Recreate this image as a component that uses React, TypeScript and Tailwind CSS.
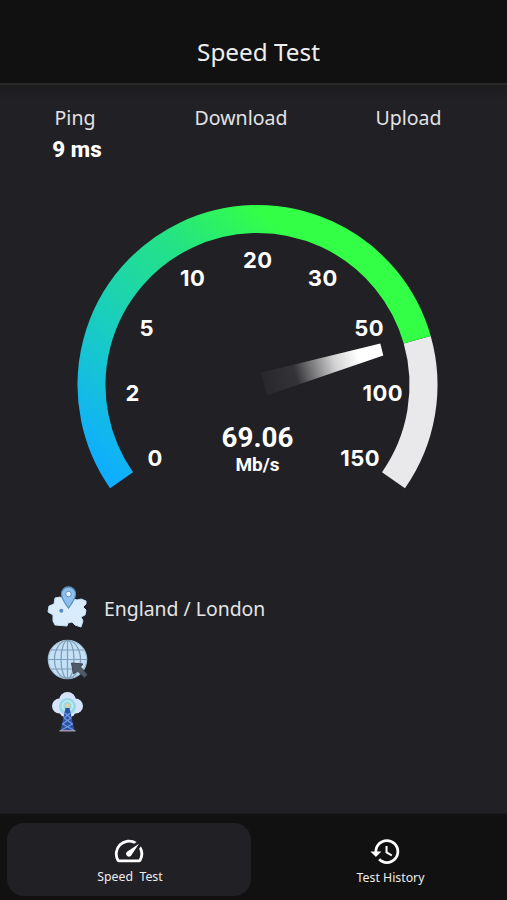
import type { ReactNode } from 'react';
import { MdHistory, MdSpeed } from 'react-icons/md';

const TICKS = [
  { label: '0', x: 155, y: 458 },
  { label: '2', x: 132.5, y: 393 },
  { label: '5', x: 146.5, y: 328 },
  { label: '10', x: 192.5, y: 278 },
  { label: '20', x: 257.5, y: 260 },
  { label: '30', x: 322.5, y: 278 },
  { label: '50', x: 369, y: 328 },
  { label: '100', x: 382.5, y: 393 },
  { label: '150', x: 360, y: 458 },
];

const CX = 257.5;
const CY = 385;
const RADIUS = 166;

function arc(from: number, to: number) {
  const point = (deg: number) => {
    const rad = (deg * Math.PI) / 180;
    return `${CX + RADIUS * Math.cos(rad)} ${CY + RADIUS * Math.sin(rad)}`;
  };
  const large = to - from > 180 ? 1 : 0;
  return `M ${point(from)} A ${RADIUS} ${RADIUS} 0 ${large} 1 ${point(to)}`;
}

export default function App() {
  return (
    <div className="flex h-[900px] w-[507px] flex-col overflow-hidden bg-[#212025] font-['Noto_Sans',sans-serif] text-[#eeeeee]">
      <header className="flex h-[85px] shrink-0 items-end justify-center border-b-2 border-[#29292a] bg-[#111111] pb-[14px] pl-[10px]">
        <h1 className="text-[24.3px] leading-[34px]">Speed Test</h1>
      </header>

      <main className="flex flex-1 flex-col bg-linear-to-b from-[#1c1c1f] to-[#212025] to-[16px]">
        <section className="flex h-[95px] pt-[19px]">
          <Metric label="Ping" value="9 ms" className="w-[150px]" />
          <Metric label="Download" className="w-[182px]" />
          <Metric label="Upload" className="w-[153px]" />
        </section>

        <Gauge value="69.06" unit="Mb/s" />

        <section className="mt-[62px] flex flex-col pl-[44px]">
          <InfoRow icon={<MapIcon />} text="England / London" />
          <InfoRow icon={<GlobeIcon />} />
          <InfoRow icon={<TowerIcon />} />
        </section>
      </main>

      <nav className="flex h-[87px] shrink-0 border-t border-[#19191b] bg-[#111111] px-[7px] pt-[9px] pb-[4px]">
        <NavTab icon={<MdSpeed size={34} />} label="Speed  Test" active />
        <NavTab icon={<MdHistory size={33} className="mr-[10px]" />} label="Test History" />
      </nav>
    </div>
  );
}

function Metric({ label, value, className }: { label: string; value?: string; className: string }) {
  return (
    <div className={`flex flex-col items-center ${className}`}>
      <span className="text-[19.5px] leading-[27px] text-[#e2e2e4]">{label}</span>
      {value && (
        <span className="mt-[4px] pl-[4px] font-['Roboto',sans-serif] text-[22.4px] leading-[28px] font-extrabold text-white">
          {value}
        </span>
      )}
    </div>
  );
}

function Gauge({ value, unit }: { value: string; unit: string }) {
  return (
    <svg width="507" height="340" viewBox="0 180 507 340" className="shrink-0">
      <defs>
        <linearGradient id="speed" gradientUnits="userSpaceOnUse" x1="110" y1="488" x2="314" y2="259">
          <stop offset="0.03" stopColor="#0faeff" />
          <stop offset="0.38" stopColor="#19cdc1" />
          <stop offset="0.74" stopColor="#24e383" />
          <stop offset="1" stopColor="#33ff47" />
        </linearGradient>
        <linearGradient id="needle" gradientUnits="userSpaceOnUse" x1="264" y1="384" x2="382" y2="350">
          <stop offset="0" stopColor="#29282d" />
          <stop offset="0.27" stopColor="#343337" />
          <stop offset="0.36" stopColor="#606063" />
          <stop offset="0.6" stopColor="#d2d2d3" />
          <stop offset="0.8" stopColor="#ffffff" />
        </linearGradient>
      </defs>

      <path d={arc(-15.8, 35)} fill="none" stroke="#e9e8eb" strokeWidth="28" />
      <path d={arc(145, 344.2)} fill="none" stroke="url(#speed)" strokeWidth="28" />
      <path d="M260.7 372.7 L380.3 343.6 L383.3 355.5 L267.3 395.3 Z" fill="url(#needle)" />

      <g
        fill="#ffffff"
        textAnchor="middle"
        className="font-['Inter',sans-serif] text-[22px] font-bold tracking-[0.5px]"
      >
        {TICKS.map((tick) => (
          <text key={tick.label} x={tick.x + 0.25} y={tick.y + 7.7}>
            {tick.label}
          </text>
        ))}
      </g>

      <g fill="#ffffff" textAnchor="middle" className="font-['Roboto',sans-serif] font-bold">
        <text x={CX} y="447.3" className="text-[27.8px]">
          {value}
        </text>
        <text x={CX} y="471" className="text-[19px]">
          {unit}
        </text>
      </g>
    </svg>
  );
}

function InfoRow({ icon, text }: { icon: ReactNode; text?: string }) {
  return (
    <div className="flex h-[52px] items-center gap-[12px]">
      {icon}
      {text && <span className="text-[19.4px] leading-[27px] text-[#e4e4e6]">{text}</span>}
    </div>
  );
}

function NavTab({ icon, label, active = false }: { icon: ReactNode; label: string; active?: boolean }) {
  return (
    <button
      className={
        active
          ? 'flex w-[244px] flex-col items-center rounded-[17px] bg-[#212025] pt-[12px] pl-[2px]'
          : 'flex flex-1 flex-col items-center pt-[11px] pl-[30px]'
      }
    >
      <span className={active ? 'flex h-[32px] items-center pr-[3px] text-white' : 'flex h-[34px] items-center text-white'}>
        {icon}
      </span>
      <span className="text-[12.3px] leading-[20px] whitespace-pre">{label}</span>
    </button>
  );
}

function MapIcon() {
  return (
    <svg width="48" height="48" viewBox="0 0 48 48">
      <path
        d="M11 14 L16 13 L20 15 L30 15 L33 16 L37 15 L42 17 L42 20 L39 23 L42 26 L41 31 L37 33 L39 37 L37 43 L31 41 L28 38 L24 39 L23 42 L11 41 L9 37 L9 31 L4 28 L5 22 L10 20 Z"
        fill="#d9ecfd"
        stroke="#c4dff6"
        strokeLinejoin="round"
      />
      <path
        d="M24.500 24 C21 19 17.500 15 17.500 10 A7 7 0 0 1 31.500 10 C31.500 15 28 19 24.500 24 Z"
        fill="#8fc0ec"
        stroke="#5a91c5"
        strokeWidth="1.300"
      />
      <circle cx="24.500" cy="10" r="2.800" fill="#e6f4ff" stroke="#5a91c5" />
      <circle cx="17.300" cy="26.700" r="2" fill="#568dc3" />
    </svg>
  );
}

function GlobeIcon() {
  return (
    <svg width="48" height="48" viewBox="0 0 48 48" fill="none">
      <circle cx="23.500" cy="23.500" r="19.200" fill="#c5e0f5" stroke="#a2bfd6" strokeWidth="1.200" />
      <g stroke="#7c9db9" strokeWidth="1.200">
        <path d="M23.500 4.500 V42.500 M4.500 23.500 H42.500 M7 14 H40 M7 33 H40" />
        <ellipse cx="23.500" cy="23.500" rx="6.500" ry="19" />
        <ellipse cx="23.500" cy="23.500" rx="13" ry="19" />
      </g>
      <path
        d="M27.500 27 L39 28 L36.500 31 L43 38.500 L40.500 41.500 L33.500 35 L29.500 38 Z"
        fill="#505a68"
        stroke="#3f4957"
        strokeLinejoin="round"
      />
    </svg>
  );
}

function TowerIcon() {
  return (
    <svg width="48" height="48" viewBox="0 0 48 48" fill="none">
      <g fill="#d5e3fd">
        <circle cx="23.500" cy="12.500" r="8.500" />
        <circle cx="15.500" cy="18" r="7.500" />
        <circle cx="31.500" cy="18" r="7.500" />
        <circle cx="23.500" cy="21" r="9" />
      </g>
      <circle cx="23.500" cy="18.500" r="8.500" fill="#96d8e8" />
      <circle cx="23.500" cy="18" r="5" stroke="#c2f0ec" strokeWidth="1.500" />
      <path d="M21.500 20 H25.500 L30.500 42.500 H16.500 Z" fill="#3151a4" />
      <path
        d="M20.800 25 L27 30 L18.500 36 L29.500 42 M26.200 25 L20 30 L28.500 36 L17.500 42"
        stroke="#6e9ee7"
        strokeWidth="1.100"
      />
      <circle cx="23.500" cy="17.500" r="2.200" fill="#e5cda2" />
      <path d="M15.500 42.800 H31.500" stroke="#b9a6ba" strokeWidth="1.300" />
    </svg>
  );
}
